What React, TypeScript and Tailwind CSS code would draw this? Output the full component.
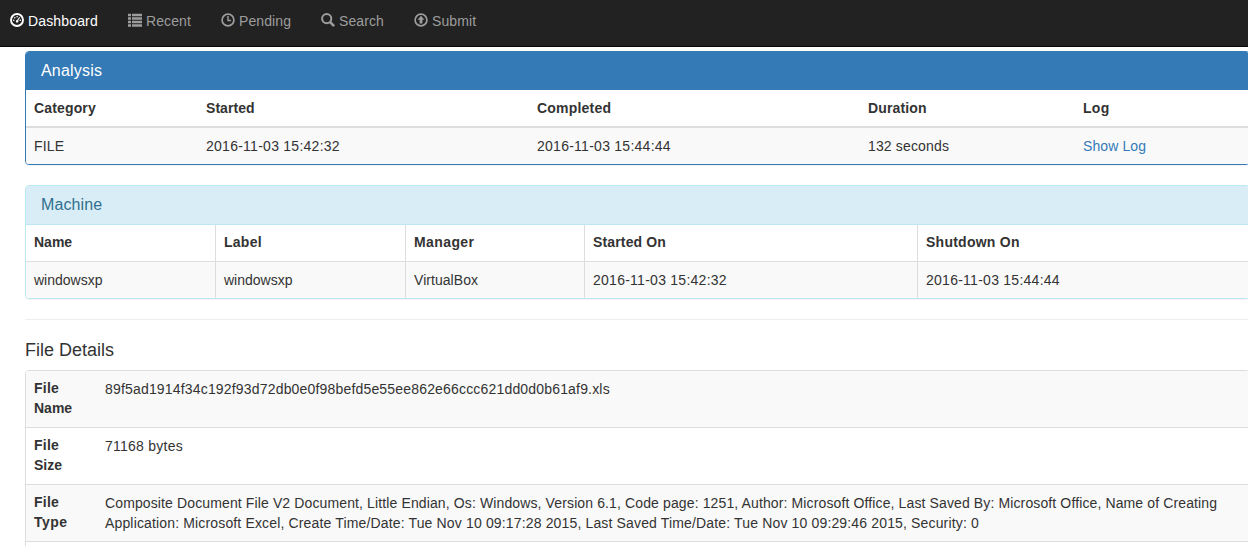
import type { ReactNode } from "react";

const Icon = ({ children }: { children: ReactNode }) => (
  <svg viewBox="0 0 14 14" className="mr-1 size-3.5 shrink-0" fill="none" stroke="currentColor">
    {children}
  </svg>
);

const DashboardIcon = () => (
  <Icon>
    <circle cx="7" cy="7" r="6" strokeWidth="1.9" />
    <g fill="currentColor" stroke="none">
      <circle cx="3.7" cy="7.2" r="0.8" />
      <circle cx="4.8" cy="4.8" r="0.8" />
      <circle cx="7.1" cy="3.8" r="0.8" />
      <circle cx="10.3" cy="7.2" r="0.8" />
      <path d="M9.3 3.9l.8.5-1.9 3.2a1.3 1.3 0 1 1-1.1-.6z" />
    </g>
  </Icon>
);

const ListIcon = () => (
  <Icon>
    <path d="M0 2h3M0 5.5h3M0 9h3M0 12.5h3M4 2h10M4 5.5h10M4 9h10M4 12.5h10" strokeWidth="2.4" />
  </Icon>
);

const TimeIcon = () => (
  <Icon>
    <circle cx="7" cy="7" r="5.9" strokeWidth="1.7" />
    <path d="M7 3v4.5h3" strokeWidth="1.4" />
  </Icon>
);

const SearchIcon = () => (
  <Icon>
    <circle cx="5.7" cy="5.6" r="4.6" strokeWidth="2" />
    <path d="M8.9 8.9l4.2 4.2" strokeWidth="2.6" />
  </Icon>
);

const UploadIcon = () => (
  <Icon>
    <circle cx="7" cy="7" r="5.9" strokeWidth="1.7" />
    <path d="M7 2.8l3.4 3.9H8.4V10.6H5.6V6.7H3.6z" fill="currentColor" stroke="none" />
  </Icon>
);

const nav = [
  { label: "Dashboard", icon: <DashboardIcon />, cls: "w-[118px] text-white tracking-[0.15px]" },
  { label: "Recent", icon: <ListIcon />, cls: "w-[93px] text-[#9d9d9d] tracking-[0.1px]" },
  { label: "Pending", icon: <TimeIcon />, cls: "w-[100px] text-[#9d9d9d] tracking-[0.1px]" },
  { label: "Search", icon: <SearchIcon />, cls: "w-[93px] text-[#9d9d9d] tracking-[0.1px]" },
  { label: "Submit", icon: <UploadIcon />, cls: "w-[93px] text-[#9d9d9d] tracking-[0.1px]" },
];

const analysisCols = "grid grid-cols-[172px_331px_331px_215px_1fr]";
const machineCols = "grid grid-cols-[190px_190px_179px_333px_1fr]";

const analysisHead = [
  { text: "Category", cls: "tracking-[0.15px]" },
  { text: "Started", cls: "tracking-[0.05px]" },
  { text: "Completed", cls: "tracking-[0.2px]" },
  { text: "Duration", cls: "tracking-[0.15px]" },
  { text: "Log", cls: "tracking-[0.3px]" },
];

const machineHead = [
  { text: "Name", cls: "" },
  { text: "Label", cls: "tracking-[0.25px]" },
  { text: "Manager", cls: "tracking-[0.4px]" },
  { text: "Started On", cls: "tracking-[0.15px]" },
  { text: "Shutdown On", cls: "tracking-[0.25px]" },
];

const machineRow = [
  { text: "windowsxp", cls: "" },
  { text: "windowsxp", cls: "" },
  { text: "VirtualBox", cls: "tracking-[0.05px]" },
  { text: "2016-11-03 15:42:32", cls: "tracking-[0.26px]" },
  { text: "2016-11-03 15:44:44", cls: "tracking-[0.26px]" },
];

const details = [
  {
    id: "name",
    name: [{ text: "File", cls: "tracking-[0.25px]" }, { text: "Name", cls: "" }],
    value: [{ text: "89f5ad1914f34c192f93d72db0e0f98befd5e55ee862e66ccc621dd0d0b61af9.xls", cls: "tracking-[0.177px]" }],
  },
  {
    id: "size",
    name: [{ text: "File", cls: "tracking-[0.25px]" }, { text: "Size", cls: "" }],
    value: [{ text: "71168 bytes", cls: "tracking-[0.25px]" }],
  },
  {
    id: "type",
    name: [{ text: "File", cls: "tracking-[0.25px]" }, { text: "Type", cls: "tracking-[0.5px]" }],
    value: [
      {
        text: "Composite Document File V2 Document, Little Endian, Os: Windows, Version 6.1, Code page: 1251, Author: Microsoft Office, Last Saved By: Microsoft Office, Name of Creating",
        cls: "tracking-[0.123px]",
      },
      {
        text: "Application: Microsoft Excel, Create Time/Date: Tue Nov 10 09:17:28 2015, Last Saved Time/Date: Tue Nov 10 09:29:46 2015, Security: 0",
        cls: "tracking-[0.152px]",
      },
    ],
  },
  { id: "next", name: [], value: [] },
];

export default function App() {
  return (
    <div className="h-[546px] w-full overflow-hidden bg-white font-['Liberation_Sans',Arial,sans-serif] text-[14px] leading-5 whitespace-nowrap text-[#333]">
      <nav className="flex h-[47px] border-b border-[#080808] bg-[#222] pt-[10px] pl-[10px]">
        {nav.map((n) => (
          <a key={n.label} className={`flex h-5 items-center ${n.cls}`}>
            {n.icon}
            <span className="pt-px">{n.label}</span>
          </a>
        ))}
      </nav>

      <main className="ml-[25px] w-[1225px] pt-1">
        <section className="h-[114px] overflow-hidden rounded border border-[#337ab7] shadow-[0_1px_1px_rgba(0,0,0,0.05)]">
          <h3 className="h-[38px] bg-[#337ab7] pt-[9px] pl-[15px] text-[16px] leading-5 tracking-[0.2px] text-white">Analysis</h3>
          <div className={`${analysisCols} h-[38px] border-b-2 border-[#ddd] font-bold`}>
            {analysisHead.map((c) => (
              <div key={c.text} className={`p-2 ${c.cls}`}>{c.text}</div>
            ))}
          </div>
          <div className={`${analysisCols} h-9 bg-[#f9f9f9]`}>
            <div className="p-2 tracking-[0.2px]">FILE</div>
            <div className="p-2 tracking-[0.26px]">2016-11-03 15:42:32</div>
            <div className="p-2 tracking-[0.26px]">2016-11-03 15:44:44</div>
            <div className="p-2 tracking-[0.15px]">132 seconds</div>
            <div className="p-2 tracking-[0.1px] text-[#337ab7]">Show Log</div>
          </div>
        </section>

        <section className="mt-5 h-[114px] overflow-hidden rounded border border-[#bce8f1] shadow-[0_1px_1px_rgba(0,0,0,0.05)]">
          <h3 className="h-[39px] border-b border-[#bce8f1] bg-[#d9edf7] pt-[9px] pl-[15px] text-[16px] leading-5 tracking-[0.1px] text-[#31708f]">Machine</h3>
          <div className={`${machineCols} h-[37px] border-b border-[#ddd] font-bold`}>
            {machineHead.map((c) => (
              <div key={c.text} className={`border-r border-[#ddd] px-2 py-[7px] last:border-r-0 ${c.cls}`}>{c.text}</div>
            ))}
          </div>
          <div className={`${machineCols} h-9 bg-[#f9f9f9]`}>
            {machineRow.map((c, i) => (
              <div key={i} className={`border-r border-[#ddd] p-2 last:border-r-0 ${c.cls}`}>{c.text}</div>
            ))}
          </div>
        </section>

        <hr className="mt-5 border-t border-[#eee]" />
        <h4 className="mt-5 h-[30px] text-[18px] leading-5">File Details</h4>

        <section className="overflow-hidden rounded border border-[#ddd]">
          {details.map((d) => (
            <div key={d.id} className="grid h-[57px] grid-cols-[71px_1fr] border-b border-[#ddd] odd:bg-[#f9f9f9]">
              <div className="px-2 py-[7px] font-bold">
                {d.name.map((l) => <div key={l.text} className={l.cls}>{l.text}</div>)}
              </div>
              <div className="p-2">
                {d.value.map((l) => <div key={l.text} className={l.cls}>{l.text}</div>)}
              </div>
            </div>
          ))}
        </section>
      </main>
    </div>
  );
}
